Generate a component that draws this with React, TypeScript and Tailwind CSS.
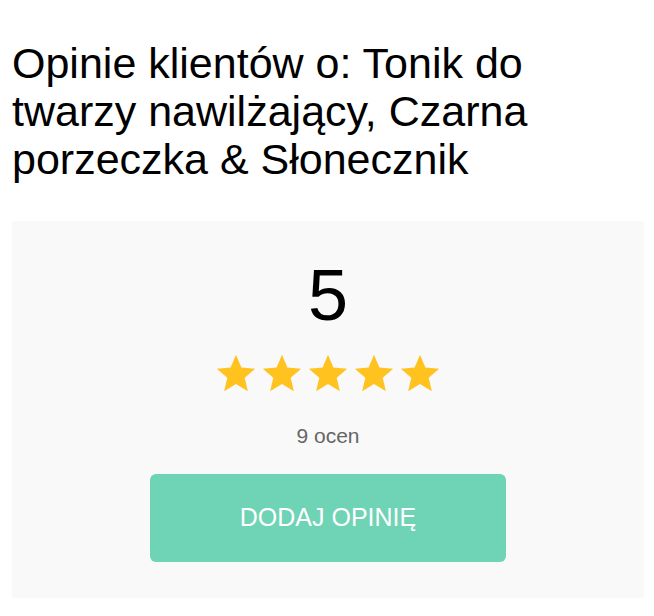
const Star = () => (
  <svg viewBox="0 0 24 24" className="h-[46px] w-[46px] fill-[#ffc21f]">
    <path d="M12 17.27L18.18 21l-1.64-7.03L22 9.24l-7.19-.61L12 2 9.19 8.63 2 9.24l5.46 4.73L5.82 21z" />
  </svg>
);

const App = () => {
  return (
    <div className="min-h-[616px] bg-white pl-3 pr-[10px] pt-[39px] font-['Liberation_Sans',Arial,sans-serif] text-black">
      <h1 className="max-w-[580px] text-[43px] leading-[48px] font-normal">
        Opinie klientów o: Tonik do twarzy nawilżający, Czarna porzeczka &amp; Słonecznik
      </h1>

      <div className="mt-[38px] flex flex-col items-center bg-[#f9f9f9] pt-[38px] pb-9">
        <div className="text-[72px] leading-none">5</div>

        <div className="mt-5 flex">
          <Star />
          <Star />
          <Star />
          <Star />
          <Star />
        </div>

        <div className="mt-[28px] text-[21px] leading-none text-[#666]">9 ocen</div>

        <button
          type="button"
          className="mt-[28px] h-[88px] w-[356px] rounded-md bg-[#6fd3b5] text-[25px] text-white"
        >
          DODAJ OPINIĘ
        </button>
      </div>
    </div>
  );
};

export default App;
